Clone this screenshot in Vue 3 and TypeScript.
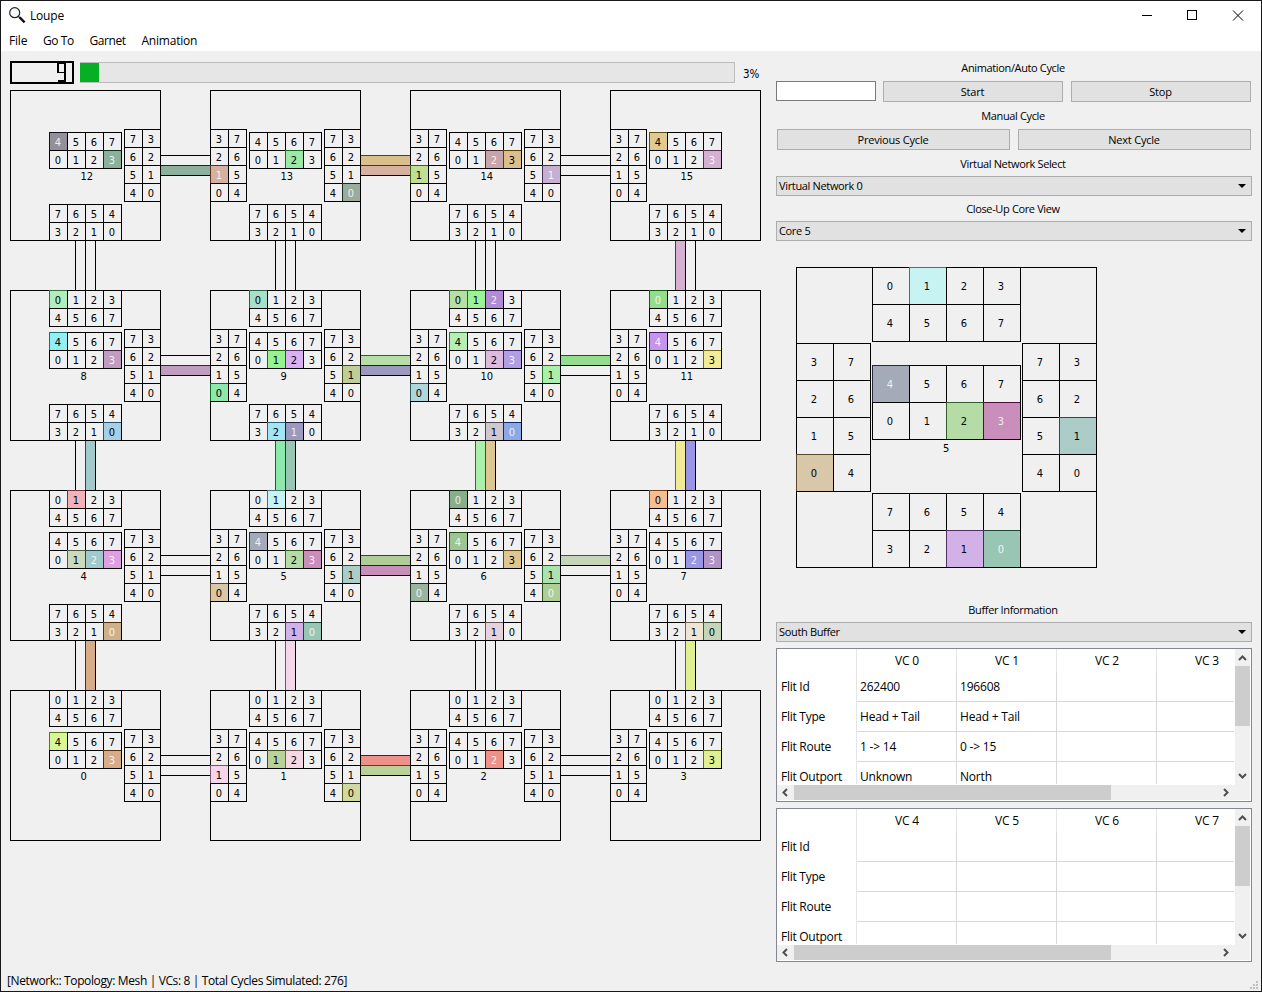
<script setup lang="ts">
type Side = 'C' | 'N' | 'S' | 'E' | 'W'

interface Cell {
  key: string
  x: number
  y: number
  vc: number
  fill?: string
  edge?: string
  light?: boolean
}

interface Block {
  key: Side
  path: string
  cells: Cell[]
}

interface CoreView {
  id: number
  x: number
  y: number
  blocks: Block[]
}

interface Channel {
  key: string
  x: number
  y: number
  w: number
  h: number
  vertical: boolean
  fill?: string
  edge?: string
}

const orders: Record<Side, number[][]> = {
  N: [[0, 1, 2, 3], [4, 5, 6, 7]],
  C: [[4, 5, 6, 7], [0, 1, 2, 3]],
  S: [[7, 6, 5, 4], [3, 2, 1, 0]],
  W: [[3, 7], [2, 6], [1, 5], [0, 4]],
  E: [[7, 3], [6, 2], [5, 1], [4, 0]],
}

// A trailing "w" marks a flit whose number is printed in white.
const flits: Record<number, Record<string, string>> = {
  12: { C4: '#949099w', C3: '#8bb19cw' },
  13: { W1: '#d6b0a0w', C2: '#9ce8a5', E0: '#9aac9ew' },
  14: { W1: '#bfdf95', C2: '#c8a4abw', C3: '#dabf8d', E1: '#c5b0d2w' },
  15: { C4: '#dfca91', C3: '#d5b0d2w' },
  8: { N0: '#b0efbb', C4: '#92eff4', C3: '#c09dc0w', S0: '#a6d0e6' },
  9: { N0: '#a6dfca', C1: '#98f290', C2: '#dbb0f0', W0: '#8ce8ab', E1: '#bfcd98', S2: '#a4e5f4', S1: '#9d98bew' },
  10: {
    N0: '#b6dfa5', N1: '#9df298', N2: '#b28bd5w', C4: '#b5efb6', C2: '#debadd',
    C3: '#b09fe5w', W0: '#b0d6dc', E1: '#aaf0ab', S1: '#cfc8cf', S0: '#8aa9e5w',
  },
  11: { N0: '#94dc8ew', C4: '#c694eaw', C3: '#f1ea97' },
  4: { N1: '#f1b3bb', C1: '#cbd9bd', C2: '#a2c9cbw', C3: '#dea0dfw', S0: '#d0b08aw' },
  5: {
    N1: '#c8f3f3', C4: '#a5aab9w', C2: '#b5dca6', C3: '#c98fbaw',
    W0: '#d8c7a8', E1: '#accdc7', S1: '#d2b1e6', S0: '#99c5b5w',
  },
  6: { N0: '#88ae8cw', C4: '#9cc592w', C3: '#dec692', W0: '#9bb49ew', E1: '#abe2af', E0: '#aecd97w', S1: '#e6d2db' },
  7: { N0: '#f7be8f', C2: '#9896e5w', C3: '#b293c6w', S1: '#eee6d2', S0: '#c5d5b8' },
  0: { C4: '#d9f797', C3: '#d7ac88w' },
  1: { W1: '#f5d5ea', C1: '#bad297', C2: '#f4d9e5', E0: '#d1d9a0' },
  2: { C2: '#ef918bw' },
  3: { C3: '#dfef91' },
}

const eastLinks: Record<number, string[]> = {
  12: ['', '#8bb19c'], 13: ['#dabf8d', '#d6b0a0'], 8: ['', '#c09dc0'],
  9: ['#b6dfa5', '#9d98be'], 10: ['#94dc8e', ''], 5: ['#aecd97', '#c98fba'],
  6: ['#c5d5b8', ''], 1: ['#ef918b', '#bad297'],
}

const southLinks: Record<number, string[]> = {
  15: ['#d5b0d2', ''], 8: ['', '#a2c9cb'], 9: ['#8ce8ab', '#99c5b5'],
  10: ['#aaf0ab', '#dec692'], 11: ['#f1ea97', '#9896e5'], 4: ['', '#d7ac88'],
  5: ['', '#f5d5ea'], 7: ['', '#dfef91'],
}

function tint(hex: string): string {
  const part = (i: number) => Math.max(0, parseInt(hex.slice(i, i + 2), 16) - 128)
  return `rgb(${part(1)}, ${part(3)}, ${part(5)})`
}

function makeBlock(id: number, side: Side, x: number, y: number, size: number): Block {
  const rows = orders[side]
  const w = rows[0].length * size
  const h = rows.length * size
  let path = ''
  for (let r = 0; r <= rows.length; r++) path += `M${x} ${y + r * size + 0.5}h${w + 1}`
  for (let c = 0; c <= rows[0].length; c++) path += `M${x + c * size + 0.5} ${y}v${h + 1}`
  const cells = rows.flatMap((row, r) =>
    row.map((vc, c): Cell => {
      const raw = flits[id][side + vc]
      const fill = raw ? raw.slice(0, 7) : undefined
      return {
        key: side + vc,
        x: x + c * size,
        y: y + r * size,
        vc,
        fill,
        edge: fill ? tint(fill) : undefined,
        light: raw ? raw.endsWith('w') : false,
      }
    }),
  )
  return { key: side, path, cells }
}

const cores: CoreView[] = []
const channels: Channel[] = []

for (let row = 0; row < 4; row++) {
  for (let col = 0; col < 4; col++) {
    const id = (3 - row) * 4 + col
    const x = col * 200
    const y = row * 200
    const blocks = [makeBlock(id, 'C', 39, 42, 18)]
    if (row > 0) blocks.push(makeBlock(id, 'N', 39, 0, 18))
    if (row < 3) blocks.push(makeBlock(id, 'S', 39, 114, 18))
    if (col > 0) blocks.push(makeBlock(id, 'W', 0, 39, 18))
    if (col < 3) blocks.push(makeBlock(id, 'E', 114, 39, 18))
    cores.push({ id, x, y, blocks })
    for (let i = 0; i < 2; i++) {
      if (col < 3) {
        const fill = eastLinks[id]?.[i] || undefined
        channels.push({
          key: `e${id}-${i}`, x: x + 150, y: y + 65 + i * 10, w: 50, h: 10,
          vertical: false, fill, edge: fill ? tint(fill) : undefined,
        })
      }
      if (row < 3) {
        const fill = southLinks[id]?.[i] || undefined
        channels.push({
          key: `s${id}-${i}`, x: x + 65 + i * 10, y: y + 150, w: 10, h: 50,
          vertical: true, fill, edge: fill ? tint(fill) : undefined,
        })
      }
    }
  }
}

const closeUp: Block[] = [
  makeBlock(5, 'C', 76, 98, 37),
  makeBlock(5, 'N', 76, 0, 37),
  makeBlock(5, 'S', 76, 226, 37),
  makeBlock(5, 'W', 0, 76, 37),
  makeBlock(5, 'E', 226, 76, 37),
]

const menus = ['File', 'Go To', 'Garnet', 'Animation']

const tables = [
  {
    heads: ['VC 0', 'VC 1', 'VC 2', 'VC 3'],
    rows: [
      ['Flit Id', '262400', '196608', '', ''],
      ['Flit Type', 'Head + Tail', 'Head + Tail', '', ''],
      ['Flit Route', '1 -> 14', '0 -> 15', '', ''],
      ['Flit Outport', 'Unknown', 'North', '', ''],
    ],
  },
  {
    heads: ['VC 4', 'VC 5', 'VC 6', 'VC 7'],
    rows: [
      ['Flit Id', '', '', '', ''],
      ['Flit Type', '', '', '', ''],
      ['Flit Route', '', '', '', ''],
      ['Flit Outport', '', '', '', ''],
    ],
  },
]
</script>

<template>
  <div class="window">
    <header class="titlebar">
      <svg class="app-icon" width="18" height="18" viewBox="0 0 18 18">
        <circle cx="5.7" cy="5.7" r="5" fill="#f6f8fa" stroke="#222" stroke-width="1.2" />
        <path d="M9.2 9.2l2 2" stroke="#222" stroke-width="1.3" />
        <path d="M10.6 10.4l5 5" stroke="#111" stroke-width="2.3" />
      </svg>
      <span class="title">Loupe</span>
      <svg class="controls" width="104" height="12" viewBox="0 0 104 12" fill="none" stroke="#000">
        <path d="M0 5.5h10" />
        <rect x="45.5" y="0.5" width="9" height="9" />
        <path d="M91 0.5l10 10M101 0.5l-10 10" />
      </svg>
    </header>

    <nav class="menubar">
      <span v-for="m in menus" :key="m">{{ m }}</span>
    </nav>

    <main class="content">
      <section class="left">
        <div class="progress-row">
          <div class="lcd">
            <svg width="10" height="21" viewBox="0 0 10 21" fill="#000" role="img" aria-label="9">
              <rect x="0" y="0" width="9" height="2" />
              <rect x="0" y="1" width="2" height="10" />
              <rect x="7" y="1" width="2" height="19" />
              <rect x="1" y="10" width="7" height="1" />
              <rect x="1" y="18" width="7" height="2" />
            </svg>
          </div>
          <div class="progress"><div class="chunk"></div></div>
          <span class="percent">3%</span>
        </div>

        <svg class="mesh" width="752" height="752" viewBox="0 0 752 752">
          <g v-for="ch in channels" :key="ch.key">
            <rect v-if="ch.fill" :x="ch.x" :y="ch.y" :width="ch.w" :height="ch.h" :fill="ch.fill" />
            <path
              class="line"
              :d="ch.vertical
                ? `M${ch.x + 0.5} ${ch.y}v50M${ch.x + 10.5} ${ch.y}v50`
                : `M${ch.x} ${ch.y + 0.5}h50M${ch.x} ${ch.y + 10.5}h50`"
            />
            <rect
              v-if="ch.fill"
              :x="ch.x"
              :y="ch.y"
              :width="ch.vertical ? 1 : 50"
              :height="ch.vertical ? 50 : 1"
              :fill="ch.edge"
            />
          </g>
          <g v-for="core in cores" :key="core.id" :transform="`translate(${core.x} ${core.y})`">
            <rect class="line" x="0.5" y="0.5" width="150" height="150" />
            <g v-for="b in core.blocks" :key="b.key">
              <template v-for="c in b.cells" :key="c.key">
                <rect v-if="c.fill" :x="c.x" :y="c.y" width="18" height="18" :fill="c.fill" />
              </template>
              <path class="line" :d="b.path" />
              <template v-for="c in b.cells" :key="c.key">
                <path v-if="c.fill" :d="`M${c.x} ${c.y}h18v1h-17v17h-1z`" :fill="c.edge" />
                <text
                  :x="c.x + 9"
                  :y="c.y + 14"
                  text-anchor="middle"
                  :class="['num', { light: c.light }]"
                >{{ c.vc }}</text>
              </template>
            </g>
            <text class="num" x="70.5" y="90">{{ core.id }}</text>
          </g>
        </svg>
      </section>

      <aside class="right">
        <div class="caption">Animation/Auto Cycle</div>
        <div class="row auto">
          <input class="edit" type="text" />
          <button class="btn wide">Start</button>
          <button class="btn wide">Stop</button>
        </div>
        <div class="caption manual">Manual Cycle</div>
        <div class="row manual-row">
          <button class="btn">Previous Cycle</button>
          <button class="btn">Next Cycle</button>
        </div>
        <div class="caption vnet">Virtual Network Select</div>
        <div class="combo">Virtual Network 0<i></i></div>
        <div class="caption core">Close-Up Core View</div>
        <div class="combo">Core 5<i></i></div>

        <svg class="closeup" width="302" height="301" viewBox="0 0 302 301">
          <rect class="line" x="0.5" y="0.5" width="300" height="300" />
          <g v-for="b in closeUp" :key="b.key">
            <template v-for="c in b.cells" :key="c.key">
              <rect v-if="c.fill" :x="c.x" :y="c.y" width="37" height="37" :fill="c.fill" />
            </template>
            <path class="line" :d="b.path" />
            <template v-for="c in b.cells" :key="c.key">
              <path v-if="c.fill" :d="`M${c.x} ${c.y}h37v1h-36v36h-1z`" :fill="c.edge" />
              <text
                :x="c.x + 18"
                :y="c.y + 23"
                text-anchor="middle"
                :class="['num', { light: c.light }]"
              >{{ c.vc }}</text>
            </template>
          </g>
          <text class="num" x="147" y="185">5</text>
        </svg>

        <div class="caption buffer">Buffer Information</div>
        <div class="combo">South Buffer<i></i></div>

        <div v-for="(t, ti) in tables" :key="ti" class="table">
          <div class="grid">
            <div class="tr head">
              <div class="th"></div>
              <div v-for="h in t.heads" :key="h" class="td">{{ h }}</div>
            </div>
            <div v-for="r in t.rows" :key="r[0]" class="tr">
              <div class="th">{{ r[0] }}</div>
              <div v-for="(v, i) in r.slice(1)" :key="i" class="td">{{ v }}</div>
            </div>
          </div>
          <div class="vbar">
            <svg width="15" height="17" viewBox="0 0 15 17"><path d="M4 11l3.5-3.5 3.5 3.5" /></svg>
            <div class="vthumb"></div>
            <svg class="end" width="15" height="17" viewBox="0 0 15 17"><path d="M4 6l3.5 3.5 3.5-3.5" /></svg>
          </div>
          <div class="hbar">
            <svg width="17" height="15" viewBox="0 0 17 15"><path d="M10 4l-3.5 3.5 3.5 3.5" /></svg>
            <div class="hthumb"></div>
            <svg class="end" width="17" height="15" viewBox="0 0 17 15"><path d="M7 4l3.5 3.5-3.5 3.5" /></svg>
          </div>
        </div>
      </aside>
    </main>

    <footer class="status">
      <span>[Network:: Topology: Mesh | VCs: 8 | Total Cycles Simulated: 276]</span>
      <svg class="grip" width="9" height="9" viewBox="0 0 9 9" fill="#bfbfbf">
        <path d="M6 0h2v2h-2zM3 3h2v2h-2zM6 3h2v2h-2zM0 6h2v2h-2zM3 6h2v2h-2zM6 6h2v2h-2z" />
      </svg>
    </footer>
  </div>
</template>

<style>
html,
body {
  margin: 0;
  overflow: hidden;
}
</style>

<style scoped>
.window {
  box-sizing: border-box;
  width: 1262px;
  height: 992px;
  border: 1px solid #18181a;
  background: #f0f0f0;
  color: #000;
  font: 12px/16px "Open Sans", "Noto Sans", sans-serif;
  letter-spacing: -0.2px;
  display: flex;
  flex-direction: column;
  white-space: nowrap;
}
.titlebar {
  height: 30px;
  background: #fff;
  display: flex;
  flex: none;
}
.app-icon {
  margin: 6px 0 0 8px;
}
.title {
  margin: 7px 0 0 3px;
}
.controls {
  margin: 9px 15px 0 auto;
}
.menubar {
  flex: none;
  box-sizing: border-box;
  height: 20px;
  padding: 2px 0 0 8px;
  background: #fff;
  display: flex;
  gap: 15.7px;
  letter-spacing: -0.4px;
}
.menubar span:first-child,
.menubar span:last-child {
  letter-spacing: -0.2px;
}
.content {
  display: flex;
  height: 920px;
  flex: none;
}
.left {
  width: 766px;
  flex: none;
  padding-left: 9px;
}
.left,
.right {
  box-sizing: border-box;
}
.progress-row {
  display: flex;
  height: 29px;
  padding-top: 10px;
}
.lcd {
  box-sizing: border-box;
  width: 64px;
  height: 23px;
  border: 2px solid #000;
  display: flex;
  justify-content: flex-end;
  padding-right: 5px;
}
.lcd svg {
  margin-top: -1px;
}
.progress {
  box-sizing: border-box;
  width: 655px;
  height: 21px;
  margin: 1px 0 0 6px;
  border: 1px solid #bcbcbc;
  background: #e6e6e6;
}
.chunk {
  width: 19px;
  height: 19px;
  margin-left: -1px;
  background: #06b025;
}
.percent {
  margin: 5px 0 0 8px;
  font: 11.5px/16px "DejaVu Sans Condensed", "DejaVu Sans", sans-serif;
  letter-spacing: 0;
}
.mesh,
.closeup {
  display: block;
}
.line {
  fill: none;
  stroke: #000;
  stroke-width: 1;
}
.num {
  font: 11px "DejaVu Sans Condensed", "DejaVu Sans", sans-serif;
  letter-spacing: 0;
  fill: #000;
}
.light {
  fill: #fff;
  fill-opacity: 0.85;
}
.right {
  width: 476px;
  margin-left: 9px;
  padding-top: 4px;
  font-size: 11px;
}
.caption {
  height: 26px;
  line-height: 26px;
  text-align: center;
  padding-right: 2px;
  letter-spacing: -0.36px;
}
.row {
  display: flex;
  height: 21px;
}
.auto {
  gap: 8px;
}
.manual-row {
  gap: 8px;
  padding: 0 1px;
}
.manual {
  height: 27px;
  line-height: 28px;
}
.vnet {
  line-height: 28px;
}
.core {
  height: 25px;
}
.buffer {
  height: 24px;
  line-height: 24px;
}
.edit {
  box-sizing: border-box;
  width: 100px;
  height: 20px;
  margin: 0 -1px 0 0;
  padding: 0 3px;
  border: 1px solid #7a7a7a;
  background: #fff;
  font: inherit;
}
.btn {
  box-sizing: border-box;
  flex: 1;
  height: 21px;
  padding: 0 1px 0 0;
  border: 1px solid #adadad;
  border-radius: 0;
  background: #e1e1e1;
  color: #000;
  font: inherit;
  letter-spacing: inherit;
  line-height: 19px;
}
.wide {
  flex: none;
  width: 180px;
}
.combo {
  box-sizing: border-box;
  height: 20px;
  line-height: 18px;
  border: 1px solid #adadad;
  background: #e1e1e1;
  padding: 0 5px 0 2px;
  display: flex;
  justify-content: space-between;
  align-items: center;
  letter-spacing: -0.34px;
}
.combo i {
  border: 4px solid transparent;
  border-top-color: #000;
  border-bottom: 0;
}
.closeup {
  margin: 26px 0 30px 20px;
}
.table {
  box-sizing: border-box;
  height: 154px;
  margin-top: 6px;
  border: 1px solid #828790;
  background: #fff;
  font-size: 12px;
  display: grid;
  grid-template-columns: 458px 15px;
  grid-template-rows: 136px 15px;
}
.grid {
  overflow: hidden;
  width: 457px;
  height: 135px;
}
.tr {
  display: flex;
  width: 480px;
  height: 30px;
  line-height: 30px;
}
.th {
  box-sizing: border-box;
  width: 80px;
  flex: none;
  padding-left: 4px;
  border-right: 1px solid #e5e5e5;
  letter-spacing: -0.27px;
}
.td {
  box-sizing: border-box;
  width: 100px;
  flex: none;
  padding-left: 3px;
  border-right: 1px solid #d8d8d8;
  border-bottom: 1px solid #d8d8d8;
}
.head {
  height: 23px;
  line-height: 24px;
}
.head .td {
  padding: 0 0 0 1px;
  text-align: center;
  border-right-color: #e5e5e5;
  border-bottom: 0;
}
.vbar,
.hbar {
  background: #f0f0f0;
  display: flex;
}
.vbar {
  flex-direction: column;
}
.hbar {
  width: 473px;
  box-sizing: border-box;
  padding-right: 16px;
}
.vthumb {
  height: 60px;
  background: #cdcdcd;
}
.hthumb {
  width: 317px;
  background: #cdcdcd;
}
.vbar .end {
  margin-top: auto;
}
.hbar .end {
  margin-left: auto;
}
.vbar path,
.hbar path {
  fill: none;
  stroke: #505050;
  stroke-width: 2;
}
.status {
  flex: 1;
  display: flex;
  justify-content: space-between;
  padding: 2px 2px 0 6px;
  letter-spacing: -0.37px;
}
.grip {
  margin: 8px 0 0;
}
</style>
